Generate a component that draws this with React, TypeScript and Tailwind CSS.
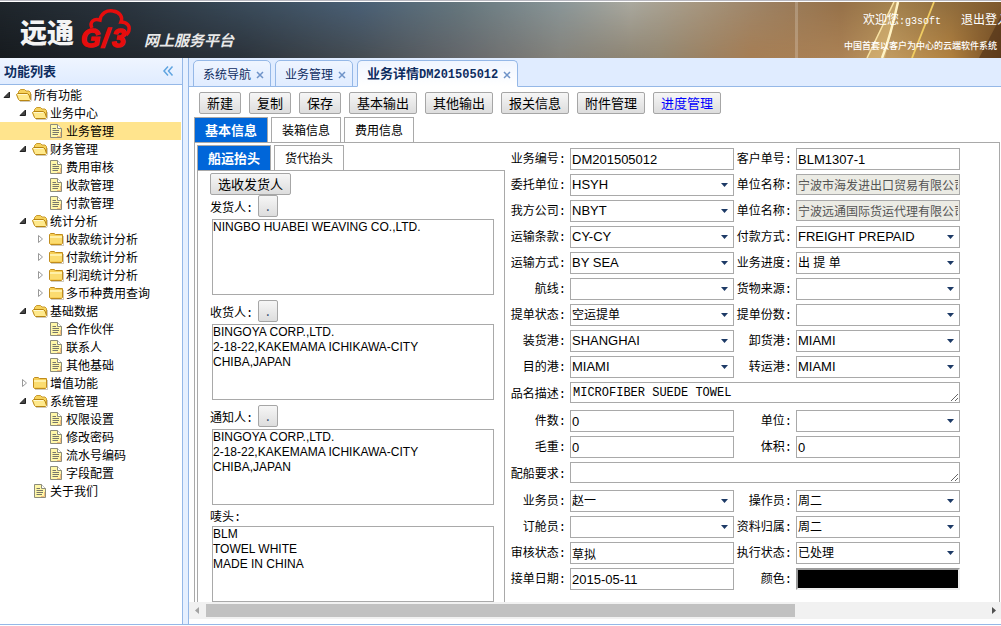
import { useState } from 'react'
import clsx from 'clsx'

const arial = "font-['Liberation_Sans','Noto_Sans_CJK_SC',sans-serif]"
const mono = "font-['Liberation_Mono','Noto_Sans_CJK_SC',monospace]"

type NodeKind = 'open' | 'closed' | 'file'

interface ITreeNode {
  label: string
  level: number
  kind: NodeKind
}

const tree: ITreeNode[] = [
  { label: '所有功能', level: 0, kind: 'open' },
  { label: '业务中心', level: 1, kind: 'open' },
  { label: '业务管理', level: 2, kind: 'file' },
  { label: '财务管理', level: 1, kind: 'open' },
  { label: '费用审核', level: 2, kind: 'file' },
  { label: '收款管理', level: 2, kind: 'file' },
  { label: '付款管理', level: 2, kind: 'file' },
  { label: '统计分析', level: 1, kind: 'open' },
  { label: '收款统计分析', level: 2, kind: 'closed' },
  { label: '付款统计分析', level: 2, kind: 'closed' },
  { label: '利润统计分析', level: 2, kind: 'closed' },
  { label: '多币种费用查询', level: 2, kind: 'closed' },
  { label: '基础数据', level: 1, kind: 'open' },
  { label: '合作伙伴', level: 2, kind: 'file' },
  { label: '联系人', level: 2, kind: 'file' },
  { label: '其他基础', level: 2, kind: 'file' },
  { label: '增值功能', level: 1, kind: 'closed' },
  { label: '系统管理', level: 1, kind: 'open' },
  { label: '权限设置', level: 2, kind: 'file' },
  { label: '修改密码', level: 2, kind: 'file' },
  { label: '流水号编码', level: 2, kind: 'file' },
  { label: '字段配置', level: 2, kind: 'file' },
  { label: '关于我们', level: 1, kind: 'file' },
]

type FieldKind = 'input' | 'select' | 'disabled' | 'area' | 'color'

interface IField {
  label: string
  kind: FieldKind
  value?: string
}

const fields: IField[] = [
  { label: '业务编号', kind: 'input', value: 'DM201505012' },
  { label: '客户单号', kind: 'input', value: 'BLM1307-1' },
  { label: '委托单位', kind: 'select', value: 'HSYH' },
  { label: '单位名称', kind: 'disabled', value: '宁波市海发进出口贸易有限公司' },
  { label: '我方公司', kind: 'select', value: 'NBYT' },
  { label: '单位名称', kind: 'disabled', value: '宁波远通国际货运代理有限公司' },
  { label: '运输条款', kind: 'select', value: 'CY-CY' },
  { label: '付款方式', kind: 'select', value: 'FREIGHT PREPAID' },
  { label: '运输方式', kind: 'select', value: 'BY SEA' },
  { label: '业务进度', kind: 'select', value: '出 提 单' },
  { label: '航线', kind: 'select' },
  { label: '货物来源', kind: 'select' },
  { label: '提单状态', kind: 'select', value: '空运提单' },
  { label: '提单份数', kind: 'select' },
  { label: '装货港', kind: 'select', value: 'SHANGHAI' },
  { label: '卸货港', kind: 'select', value: 'MIAMI' },
  { label: '目的港', kind: 'select', value: 'MIAMI' },
  { label: '转运港', kind: 'select', value: 'MIAMI' },
  { label: '品名描述', kind: 'area', value: 'MICROFIBER SUEDE TOWEL' },
  { label: '件数', kind: 'input', value: '0' },
  { label: '单位', kind: 'select' },
  { label: '毛重', kind: 'input', value: '0' },
  { label: '体积', kind: 'input', value: '0' },
  { label: '配船要求', kind: 'area' },
  { label: '业务员', kind: 'select', value: '赵一' },
  { label: '操作员', kind: 'select', value: '周二' },
  { label: '订舱员', kind: 'select' },
  { label: '资料归属', kind: 'select', value: '周二' },
  { label: '审核状态', kind: 'input', value: '草拟' },
  { label: '执行状态', kind: 'select', value: '已处理' },
  { label: '接单日期', kind: 'input', value: '2015-05-11' },
  { label: '颜色', kind: 'color' },
]

const parties = [
  { label: '发货人', value: 'NINGBO HUABEI WEAVING CO.,LTD.' },
  { label: '收货人', value: 'BINGOYA CORP.,LTD.\n2-18-22,KAKEMAMA ICHIKAWA-CITY\nCHIBA,JAPAN' },
  { label: '通知人', value: 'BINGOYA CORP.,LTD.\n2-18-22,KAKEMAMA ICHIKAWA-CITY\nCHIBA,JAPAN' },
]

const actions = ['新建', '复制', '保存', '基本输出', '其他输出', '报关信息', '附件管理', '进度管理']

const FolderIcon = ({ open }: { open: boolean }) => (
  <svg viewBox="0 0 16 16" className="size-4 shrink-0">
    {open ? (
      <>
        <path d="M2.5 8V4.5L4.5 2.5H8.5L10 4H13L14.5 5.5V12" fill="#f6d25c" stroke="#c89a2e" />
        <path d="M.5 7.5L1.5 6.5H11.5L13 8L14.5 12.5L13.5 13.5H3.5L2.5 12.5Z" fill="#ffe98c" stroke="#b98612" />
        <path d="M2 7.5H11" stroke="#fff8cf" />
        <path d="M4 14.5H14.5L15.5 13V7" fill="none" stroke="#8d7a52" strokeOpacity=".4" />
      </>
    ) : (
      <>
        <path d="M1.5 12.5V3.5L2.5 2.5H6L7.5 3.5H14.5V12.5L13.5 13.5H2.5Z" fill="#f7cf57" stroke="#c08c1c" />
        <path d="M2 5.5H14M2 6.5H14" stroke="#fff0a8" />
        <path d="M2 7H14V12H2Z" fill="#fbdc70" />
        <path d="M3 14.5H15.5V5" fill="none" stroke="#8d7a52" strokeOpacity=".4" />
      </>
    )}
  </svg>
)

const FileIcon = () => (
  <svg viewBox="0 0 16 16" className="size-4 shrink-0">
    <path d="M2.5 1.5H9.5L13.5 5.5V14.5H2.5Z" fill="#fff7a8" stroke="#8c8c7c" />
    <path d="M9.5 1.5V5.5H13.5" fill="#fff" stroke="#8c8c7c" />
    <path d="M4.5 5.5H8M4.5 7.5H11M4.5 9.5H11M4.5 11.5H10" stroke="#77776a" />
    <path d="M12.5 9V13.5H9" fill="none" stroke="#f2bd7c" />
  </svg>
)

const Arrow = ({ kind }: { kind: NodeKind }) => (
  <svg viewBox="0 0 16 16" className="size-4 shrink-0">
    {kind === 'open' && <path d="M9.5 5V10.5H4Z" fill="#444" stroke="#222" />}
    {kind === 'closed' && <path d="M6.5 4.5V11.5L10.5 8Z" fill="#fff" stroke="#999" />}
  </svg>
)

const Banner = () => (
  <header className="border-t border-[#b8b8c0]">
    <div className="relative mt-px h-14 overflow-hidden bg-[#2a3038]">
      <svg viewBox="0 0 1001 56" preserveAspectRatio="none" className="absolute inset-0 size-full">
        <defs>
          <linearGradient id="top">
            <stop offset="0" stopColor="#1f262c" />
            <stop offset=".12" stopColor="#2a343e" />
            <stop offset=".24" stopColor="#3a4b5a" />
            <stop offset=".36" stopColor="#4a6076" />
            <stop offset=".46" stopColor="#65777e" />
            <stop offset=".56" stopColor="#8a9698" />
            <stop offset=".63" stopColor="#aaa99f" />
            <stop offset=".7" stopColor="#a6967f" />
            <stop offset=".77" stopColor="#9c8061" />
            <stop offset=".84" stopColor="#967149" />
            <stop offset=".89" stopColor="#a3824f" />
            <stop offset="1" stopColor="#7f5a2e" />
          </linearGradient>
          <linearGradient id="bottom">
            <stop offset="0" stopColor="#171b1f" />
            <stop offset=".24" stopColor="#2b323a" />
            <stop offset=".36" stopColor="#454c52" />
            <stop offset=".46" stopColor="#64666a" />
            <stop offset=".56" stopColor="#84827b" />
            <stop offset=".66" stopColor="#938670" />
            <stop offset=".75" stopColor="#a57d54" />
            <stop offset=".84" stopColor="#ab8255" />
            <stop offset=".89" stopColor="#c09a60" />
            <stop offset=".95" stopColor="#b0803f" />
            <stop offset="1" stopColor="#714a22" />
          </linearGradient>
          <linearGradient id="fade" x2="0" y2="1">
            <stop offset="0" stopColor="#000" />
            <stop offset="1" stopColor="#fff" />
          </linearGradient>
          <mask id="lower">
            <rect width="1001" height="56" fill="url(#fade)" />
          </mask>
        </defs>
        <rect width="1001" height="56" fill="url(#top)" />
        <rect width="1001" height="56" fill="url(#bottom)" mask="url(#lower)" />
        <path d="M795 0H798V56H795Z" fill="#fff" fillOpacity=".2" />
        <path d="M893 0H899L885 56H867Z" fill="#f4d58a" fillOpacity=".35" />
        <path d="M894 0L867 56" stroke="#f8e2a4" strokeWidth="1.5" />
        <path d="M898 0Q890 36 882 56" fill="none" stroke="#fff3c4" strokeWidth="2.5" />
        <path d="M934 0L912 56" stroke="#f0cc62" strokeWidth="1.8" />
        <path d="M1001 14L979 56H1001Z" fill="#4f3018" fillOpacity=".6" />
      </svg>
      <div className="relative flex h-full items-start justify-between">
        <div className="flex items-start pl-5">
          <span className="pt-3 text-[27px] leading-9 font-black text-[#f4f4f4]">远通</span>
          <svg viewBox="0 0 52 42" className="mt-1.5 ml-1.5 h-[42px] w-[52px] shrink-0 overflow-visible">
            <path
              d="M12 20C9 14 14 10 20 12C21 5 27 2 33 3C40 4 43 9 41 14C47 14 50 18 49 22C49 24 48 25 46 27"
              fill="none"
              stroke="#e60d0d"
              strokeWidth="3.5"
            />
            <g
              fill="#e60d0d"
              stroke="#e60d0d"
              strokeWidth="1.5"
              fontFamily="Liberation Sans, sans-serif"
              fontSize="25"
              fontWeight="bold"
              fontStyle="italic"
            >
              <text x="1" y="39">G</text>
              <text x="22" y="39">/</text>
              <text x="32" y="39">3</text>
            </g>
          </svg>
          <span className="pt-7 pl-3 text-[15px] leading-5 font-bold text-[#e8e8e8] italic">网上服务平台</span>
        </div>
        <div className="flex flex-col items-end text-white">
          <div className="-mr-2 flex gap-5 pt-[7px] text-xs leading-5 whitespace-nowrap">
            <span>
              欢迎您<span className={clsx(mono, 'text-[10px]')}>:g3soft</span>
            </span>
            <a href="#logout">退出登入</a>
          </div>
          <p className="pt-1.5 pr-1 text-[9px] leading-4 font-medium whitespace-nowrap">
            中国首套以客户为中心的云端软件系统
          </p>
        </div>
      </div>
    </div>
  </header>
)

const Sidebar = () => {
  const [selected, setSelected] = useState(2)

  return (
    <aside className="w-[183px] shrink-0 border-r border-[#95b8e7] bg-white">
      <div className="flex h-[27px] items-center justify-between border-b border-[#95b8e7] bg-linear-to-b from-[#eff5ff] to-[#e0ecff] pr-2 pl-1">
        <h2 className="text-[13px] leading-4 font-bold text-[#0e2d5f]">功能列表</h2>
        <button aria-label="收起" className="size-3">
          <svg viewBox="0 0 12 12" className="size-3" fill="none" stroke="#5fa4e0" strokeWidth="1.5">
            <path d="M6 1.5L2 6L6 10.5M10.5 1.5L6.5 6L10.5 10.5" />
          </svg>
        </button>
      </div>
      <ul className="pt-px pr-px">
        {tree.map((node, i) => (
          <li key={i}>
            <button
              className={clsx(
                'flex h-[18px] w-full items-center text-left text-xs leading-[18px] whitespace-nowrap',
                i === selected && 'bg-[#ffe48d]',
                node.level === 1 && node.kind !== 'file' && 'pl-4',
                node.level === 1 && node.kind === 'file' && 'pl-8',
                node.level === 2 && node.kind !== 'file' && 'pl-8',
                node.level === 2 && node.kind === 'file' && 'pl-12'
              )}
              onClick={() => setSelected(i)}
            >
              {node.kind !== 'file' && <Arrow kind={node.kind} />}
              {node.kind === 'file' ? <FileIcon /> : <FolderIcon open={node.kind === 'open'} />}
              <span className="pl-0.5">{node.label}</span>
            </button>
          </li>
        ))}
      </ul>
    </aside>
  )
}

const PageTab = ({ children, active }: { children: React.ReactNode; active?: boolean }) => (
  <div
    className={clsx(
      'flex h-[27px] items-center gap-1 rounded-t-[5px] border border-[#95b8e7] bg-linear-to-b from-[#eff5ff] pr-[5px] pl-[9px] text-[#0e2d5f]',
      active ? 'border-b-white to-white font-bold' : 'to-[#e0ecff]'
    )}
  >
    <button className="text-xs leading-4 whitespace-nowrap">{children}</button>
    <button aria-label="关闭" className="mt-0.5 flex size-2.5 items-center justify-center">
      <svg viewBox="0 0 8 8" className="size-2" stroke="#6e93c8" strokeWidth="1.5">
        <path d="M1 1L7 7M7 1L1 7" />
      </svg>
    </button>
  </div>
)

const InnerTabs = ({ items }: { items: string[] }) => {
  const [current, setCurrent] = useState(0)

  return (
    <div className="flex gap-[3px]">
      {items.map((item, i) => (
        <button
          key={item}
          className={clsx(
            'h-[25px] border border-b-0 border-[#a9a9a9] px-2.5 leading-6',
            i === current ? 'bg-[#0066d9] text-[13px] font-bold text-white' : 'bg-white text-xs'
          )}
          onClick={() => setCurrent(i)}
        >
          {item}
        </button>
      ))}
    </div>
  )
}

const GreyButton = ({ className, children }: { className?: string; children: React.ReactNode }) => (
  <button
    className={clsx(
      'h-[22px] rounded-[2px] border border-[#a6a6a6] bg-linear-to-b from-[#f6f6f6] to-[#dddddd] px-[7px] text-[13px] leading-5 whitespace-nowrap',
      className
    )}
  >
    {children}
  </button>
)

const Control = ({ id, field }: { id: string; field: IField }) => {
  const { kind, value = '' } = field
  // Chinese values are set one size smaller than latin ones
  const size = /[\u4e00-\u9fff]/.test(value) ? 'text-xs' : 'text-[13px]'

  if (kind === 'select') {
    return (
      <div className="relative">
        <select
          id={id}
          defaultValue={value}
          className={clsx(arial, size, 'block h-[22px] w-full appearance-none border border-[#a9a9a9] bg-white pl-px')}
        >
          <option>{value}</option>
        </select>
        <svg viewBox="0 0 7 4" className="pointer-events-none absolute top-[9px] right-1.5 h-1 w-[7px]">
          <path d="M0 0H7L3.5 4Z" fill="#1d3a66" />
        </svg>
      </div>
    )
  }

  if (kind === 'area') {
    return (
      <textarea
        id={id}
        defaultValue={value}
        className={clsx(mono, 'block h-[21px] w-full overflow-hidden border border-[#a9a9a9] px-0.5 pt-0.5 text-xs leading-4')}
      />
    )
  }

  if (kind === 'color') {
    return (
      <input
        id={id}
        readOnly
        className="block h-[22px] w-full border-2 border-t-[#9a9a9a] border-r-[#eeeeee] border-b-[#eeeeee] border-l-[#9a9a9a] bg-black"
      />
    )
  }

  return (
    <input
      id={id}
      defaultValue={value}
      disabled={kind === 'disabled'}
      className={clsx(
        arial,
        size,
        'block w-full border border-[#a9a9a9] px-px',
        kind === 'disabled' ? 'h-[21px] bg-[#ebebe4] text-[#545454]' : 'h-[22px] bg-white'
      )}
    />
  )
}

const OrderForm = () => (
  <form className="grid flex-1 grid-cols-[61px_1fr_54px_1fr] content-start gap-1 pt-[5px] pr-[39px]">
    {fields.map((field, i) => {
      const id = `field-${i}`
      const area = field.kind === 'area'
      return (
        <div key={id} className="contents">
          <label
            htmlFor={id}
            className={clsx(mono, 'flex items-center justify-end pt-0.5 text-xs leading-4 whitespace-nowrap', area ? 'h-6' : 'h-[22px]')}
          >
            {field.label}:
          </label>
          <div className={clsx('min-w-0', area && 'col-span-3')}>
            <Control id={id} field={field} />
          </div>
        </div>
      )
    })}
  </form>
)

const areaClass = clsx(arial, 'block h-[76px] w-full resize-none border border-[#a9a9a9] text-xs leading-[15px]')

const PartyPanel = () => (
  <div className="w-[308px] shrink-0 pt-0.5">
    <InnerTabs items={['船运抬头', '货代抬头']} />
    <div className="border border-b-0 border-[#a9a9a9] pt-0.5 pr-2.5 pl-3">
      <GreyButton className="block">选收发货人</GreyButton>
      {parties.map((party, i) => (
        <div key={party.label} className="pb-[5px]">
          <div className="flex h-6">
            <label htmlFor={`party-${i}`} className={clsx(mono, 'w-12 pt-1 text-xs leading-5 whitespace-nowrap')}>
              {party.label}:
            </label>
            <GreyButton className="text-[#1d3a66]">.</GreyButton>
          </div>
          <div className="pl-0.5">
            <textarea id={`party-${i}`} defaultValue={party.value} className={areaClass} />
          </div>
        </div>
      ))}
      <label htmlFor="marks" className={clsx(mono, 'block h-4 text-xs leading-4')}>
        唛头:
      </label>
      <div className="pl-0.5">
        <textarea id="marks" defaultValue={'BLM\nTOWEL WHITE\nMADE IN CHINA'} className={areaClass} />
      </div>
    </div>
  </div>
)

const ScrollBar = () => (
  <div className="flex h-[17px] items-center bg-[#f1f1f1]">
    <svg viewBox="0 0 17 17" className="size-[17px] shrink-0">
      <path d="M10 5V12L6 8.5Z" fill="#a3a3a3" />
    </svg>
    <div className="h-[13px] flex-[589] bg-[#c1c1c1]" />
    <div className="flex-[189]" />
    <svg viewBox="0 0 17 17" className="size-[17px] shrink-0">
      <path d="M8 5V12L12 8.5Z" fill="#505050" />
    </svg>
  </div>
)

const App = () => {
  return (
    <div className="flex min-h-screen flex-col bg-white pb-px font-['Noto_Sans_CJK_SC',sans-serif] text-black">
      <Banner />
      <div className="flex flex-1 border-b border-[#95b8e7] bg-[#e6f0ff]">
        <Sidebar />
        <main className="ml-[5px] min-w-0 flex-1 border-l border-[#95b8e7] bg-white">
          <nav className="flex h-[29px] items-end gap-1 bg-[#e0ecff] pl-1 shadow-[inset_0_-1px_0_#95b8e7]">
            <PageTab>系统导航</PageTab>
            <PageTab>业务管理</PageTab>
            <PageTab active>
              <span className="text-[13px]">业务详情</span>
              <span className={mono}>DM201505012</span>
            </PageTab>
          </nav>
          <div className="flex gap-2 pt-[5px] pl-2.5">
            {actions.map(action => (
              <GreyButton key={action} className={clsx(action === '进度管理' && 'text-[#0000ff]')}>
                {action}
              </GreyButton>
            ))}
          </div>
          <div className="pt-[3px] pr-px pl-[5px]">
            <InnerTabs items={['基本信息', '装箱信息', '费用信息']} />
            <div className="flex border border-b-0 border-[#a9a9a9] pl-0.5">
              <PartyPanel />
              <OrderForm />
            </div>
          </div>
          <ScrollBar />
        </main>
      </div>
    </div>
  )
}

export default App
